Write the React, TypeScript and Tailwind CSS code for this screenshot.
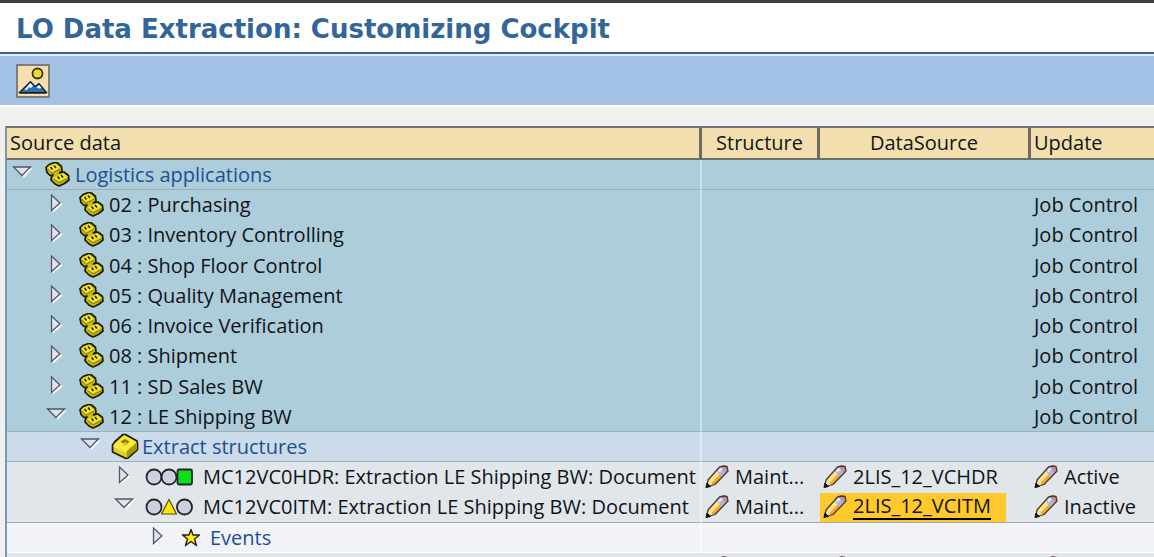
import type { ReactNode } from 'react'

type Kind = 'group' | 'app' | 'folder' | 'green' | 'yellow' | 'event'

type Row = {
  label: string
  kind: Kind
  open?: boolean
  structure?: string
  source?: string
  update?: string
  selected?: boolean
}

const rows: Row[] = [
  { label: 'Logistics applications', kind: 'group', open: true },
  { label: '02 : Purchasing', kind: 'app', update: 'Job Control' },
  { label: '03 : Inventory Controlling', kind: 'app', update: 'Job Control' },
  { label: '04 : Shop Floor Control', kind: 'app', update: 'Job Control' },
  { label: '05 : Quality Management', kind: 'app', update: 'Job Control' },
  { label: '06 : Invoice Verification', kind: 'app', update: 'Job Control' },
  { label: '08 : Shipment', kind: 'app', update: 'Job Control' },
  { label: '11 : SD Sales BW', kind: 'app', update: 'Job Control' },
  { label: '12 : LE Shipping BW', kind: 'app', update: 'Job Control', open: true },
  { label: 'Extract structures', kind: 'folder', open: true },
  {
    label: 'MC12VC0HDR: Extraction LE Shipping BW: Document',
    kind: 'green',
    structure: 'Maint...',
    source: '2LIS_12_VCHDR',
    update: 'Active',
  },
  {
    label: 'MC12VC0ITM: Extraction LE Shipping BW: Document',
    kind: 'yellow',
    open: true,
    structure: 'Maint...',
    source: '2LIS_12_VCITM',
    update: 'Inactive',
    selected: true,
  },
  { label: 'Events', kind: 'event' },
]

const rowStyle: Record<Kind, string> = {
  group: 'bg-[#aecdda]',
  app: 'bg-[#aecdda]',
  folder: 'bg-[#cbdbe9]',
  green: 'bg-[#e1e6eb]',
  yellow: 'bg-[#e1e6eb]',
  event: 'bg-[#f2f3f7]',
}

const indent: Record<Kind, string> = {
  group: 'pl-[4px]',
  app: 'pl-[38px]',
  folder: 'pl-[72px]',
  green: 'pl-[106px]',
  yellow: 'pl-[106px]',
  event: 'pl-[140px]',
}

const iconBox: Record<Kind, string> = {
  group: 'ml-[12px] w-[30px]',
  app: 'ml-[12px] w-[30px]',
  folder: 'ml-[10px] w-[31px]',
  green: 'ml-[10px] w-[58px]',
  yellow: 'ml-[10px] w-[58px]',
  event: 'ml-[12px] w-[29px]',
}

function Arrow({ open }: { open?: boolean }) {
  return open ? (
    <svg width="22" height="22" viewBox="0 0 22 22">
      <path d="M5 4.500h16.500l-8.500 9z" fill="#fff" />
      <path d="M2.500 3h17L11 11.500z" fill="#dfe3ef" stroke="#545669" strokeWidth="1.300" />
    </svg>
  ) : (
    <svg width="22" height="22" viewBox="0 0 22 22">
      <path d="M8 2.500l9.500 8L8 18.500z" fill="#fff" />
      <path d="M6.500 1v15.500l8.500-7.500z" fill="#dfe3ef" stroke="#545669" strokeWidth="1.300" />
    </svg>
  )
}

function Cubes() {
  return (
    <svg width="25" height="26" viewBox="0 0 25 26">
      <path
        d="M1 5.500L4 2.500 9.500 .5l3 .5 4 3.500 .5 4.500-2.500 2 4.500-1 4.500 3.500.5 4.500-4.500 3.500-5.500 2.500-4-2-4-4 .5-3 1.500-2L5 13.500 2 10.500z"
        fill="#c9bb12"
        stroke="#1c1b05"
        strokeWidth="1.700"
        strokeLinejoin="round"
      />
      <path d="M2.500 5.500L10 1.500l5 4.500-8 4zM8.500 15.500l9.500-4.500 4.500 4-8.500 4.500z" fill="#f4e733" />
      <path d="M3 7l4 4.500 8-4.500M9 17l5 4 9-4.500" fill="none" stroke="#857a0d" />
      <path
        d="M5.500 5l2 2.500M9 3.500l2 2.500M12.500 14.500l2 2.500M16 13l2 2.500"
        stroke="#2b2806"
        strokeWidth="1.700"
      />
    </svg>
  )
}

function Box() {
  return (
    <svg width="28" height="27" viewBox="0 0 28 27">
      <path
        d="M1.500 12L4 8.500 12 1.500h2.500L26 8l.5 3v5.500L17 25l-2 .5L1.500 19z"
        fill="#e0d21c"
        stroke="#1c1b05"
        strokeWidth="1.700"
        strokeLinejoin="round"
      />
      <path d="M2.500 12L13 2.500 25.500 9 15.500 18z" fill="#f8ec36" />
      <path d="M15.500 18.500L26 9.500v7L16 25z" fill="#a5980b" />
      <path d="M2.500 13l13 6" stroke="#fffbb0" />
      <path d="M9.500 8.500L14 6l4.500 2.500-4 4z" fill="#8b7e09" />
      <path d="M11 11l3.500-2 2.500 1.500-2.500 2z" fill="#d8c91d" />
    </svg>
  )
}

function Lights({ color }: { color: 'green' | 'yellow' }) {
  return (
    <svg width="50" height="20" viewBox="0 0 50 20">
      <g fill="#cfd0df" stroke="#24242c" strokeWidth="1.800">
        <circle cx="9" cy="10" r="7.500" />
        {color === 'green' ? <circle cx="24" cy="10" r="7.500" /> : <circle cx="39.500" cy="10" r="7.500" />}
        {color === 'green' ? (
          <rect x="32.500" y="2.500" width="14.500" height="15" rx="1.500" fill="#0be01b" />
        ) : (
          <path
            d="M24 2.500L31.500 17H16.500z"
            fill="#ffe500"
            stroke="#5a4a08"
            strokeWidth="1.200"
            strokeLinejoin="round"
          />
        )}
      </g>
    </svg>
  )
}

function Star() {
  return (
    <svg width="20" height="20" viewBox="0 0 20 20">
      <path
        d="M10 1.500l2 5.500h6.500l-5 4 2 6.500-5.500-4-5.500 4 2-6.500-5-4H8z"
        fill="#ffe91f"
        stroke="#25220a"
        strokeWidth="1.400"
        strokeLinejoin="round"
      />
    </svg>
  )
}

function Pencil() {
  return (
    <svg width="24" height="24" viewBox="0 0 24 24">
      <path d="M1.500 22l1.500-7L14.500 2l4-1.500L22 1l1 4.500L10 19.500z" fill="#f0aa2c" />
      <path d="M3.500 15.500L12 5.500l3.500 3L6 18.500z" fill="#ffe28a" />
      <path d="M11.500 5.500l3.500-3.500 6 5-4.500 5z" fill="#a8b6e0" />
      <path d="M13 5.500l3-3 2 1.500-3.500 3.500z" fill="#e3e9fb" />
      <path d="M15.500 1.500l3.500-1 3 1 .5 4-2 2z" fill="#c98a9d" />
      <path d="M3 16l3 1 2 3.500-4 1.500-2-1z" fill="#f6dcae" />
      <path
        d="M1.500 22l1.500-7L14.500 2l4-1L22 1.500l1 4.500L10 19.500z"
        fill="none"
        stroke="#4c3a30"
        strokeWidth="1.300"
        strokeLinejoin="round"
      />
      <path d="M1 22.500l1-4.500 3.500 3.500z" fill="#111" stroke="#111" />
    </svg>
  )
}

function Landscape() {
  return (
    <svg width="30" height="30" viewBox="0 0 30 30">
      <circle cx="19.500" cy="7.500" r="5" fill="#f5d92c" stroke="#3a3208" strokeWidth="1.800" />
      <path d="M1.500 26.500L12.500 15.500l4.500 5 4-3 7.500 9z" fill="#2775b4" stroke="#101c2b" strokeWidth="1.200" />
      <path d="M6.500 23.500l6-6.500 2.500 3-2 2-2-1-2 3zM18.500 21.500l2.500-2.500 2.500 3-2 .5z" fill="#fff" />
      <path d="M1.500 27h27" stroke="#101c2b" strokeWidth="1.500" />
    </svg>
  )
}

function RowIcon({ kind }: { kind: Kind }) {
  if (kind === 'folder') return <Box />
  if (kind === 'green' || kind === 'yellow') return <Lights color={kind} />
  if (kind === 'event') return <Star />
  return <Cubes />
}

function EditCell({ children, selected }: { children?: ReactNode; selected?: boolean }) {
  return (
    <button
      type="button"
      aria-label={children ? undefined : 'Edit'}
      className="flex h-[29px] w-full cursor-pointer items-center gap-[6px] pl-[3px] text-left whitespace-nowrap"
    >
      <Pencil />
      {children && (
        <span className={selected ? 'border-b-2 border-black leading-[24px]' : 'leading-[26px]'}>
          {children}
        </span>
      )}
    </button>
  )
}

function TreeRow({ row }: { row: Row }) {
  const { kind, open, selected } = row
  const line = kind === 'group' || kind === 'folder' || kind === 'yellow' || row.label.startsWith('12')
  const border = line ? 'border-b border-[#a0adb5]' : kind === 'event' ? 'border-b border-white' : ''
  const blue = kind === 'group' || kind === 'folder' || kind === 'event'

  return (
    <tr className={`h-[30px] nth-[4n]:h-[31px] ${rowStyle[kind]}`}>
      <td className={`border-r-2 border-r-white/40 ${border}`}>
        <div className={`flex h-[29px] items-center ${indent[kind]}`}>
          <button type="button" aria-label={open ? 'Collapse' : 'Expand'} className="shrink-0 cursor-pointer">
            <Arrow open={open} />
          </button>
          <span className={`flex shrink-0 ${iconBox[kind]}`}>
            <RowIcon kind={kind} />
          </span>
          <span className={blue ? 'whitespace-nowrap text-[#1c4f93]' : 'whitespace-nowrap'}>{row.label}</span>
        </div>
      </td>
      <td className={border}>{row.structure && <EditCell>{row.structure}</EditCell>}</td>
      <td className={border}>
        {row.source && (
          <div className={selected ? 'mr-[25px] bg-[#ffc92c]' : ''}>
            <EditCell selected={selected}>{row.source}</EditCell>
          </div>
        )}
      </td>
      <td className={border}>
        {row.structure ? <EditCell>{row.update}</EditCell> : <span className="pl-[3px]">{row.update}</span>}
      </td>
    </tr>
  )
}

function App() {
  return (
    <main className="flex h-screen flex-col overflow-hidden bg-[#f0f0f1] font-['Open_Sans','Noto_Sans',sans-serif] text-[20px] leading-[26px] text-[#101418]">
      <header className="shrink-0 border-t-3 border-b-2 border-t-[#404040] border-b-[#3f6199] bg-white pt-[9px] pb-[6px] pl-[16px]">
        <h1 className="font-['DejaVu_Sans',sans-serif] text-[26px] leading-[34px] font-bold whitespace-nowrap text-[#336698]">
          LO Data Extraction: Customizing Cockpit
        </h1>
      </header>
      <div className="flex shrink-0 border-y-2 border-t-[#e3eff3] border-b-white bg-[#a3c0e5] pt-[8px] pb-[7px] pl-[16px]">
        <button
          type="button"
          aria-label="Overview"
          className="flex size-[34px] cursor-pointer items-center justify-center border-2 border-[#7d7e7b] bg-[#f5dfae]"
        >
          <Landscape />
        </button>
      </div>

      <div className="mt-[19px] ml-[5px] border-t-2 border-l-2 border-t-[#66727e] border-l-[#7d96b5]">
        <table className="w-full table-fixed border-separate border-spacing-0">
          <thead>
            <tr className="h-[32px] bg-[#f3dfae] [&>th]:border-b-2 [&>th]:border-b-[#706f68] [&>th]:py-0 [&>th]:font-normal">
              <th className="border-r-3 border-r-[#706a66] pl-[3px] text-left">Source data</th>
              <th className="w-[118px] border-r-3 border-r-[#706a66]">Structure</th>
              <th className="w-[211px] border-r-3 border-r-[#706a66]">DataSource</th>
              <th className="w-[123px] pl-[3px] text-left">Update</th>
            </tr>
          </thead>
          <tbody className="[&_td]:p-0">
            {rows.map((row) => (
              <TreeRow key={row.label} row={row} />
            ))}
            <tr className="h-[30px] bg-[#e1e6eb]">
              <td />
              <td>
                <EditCell />
              </td>
              <td>
                <EditCell />
              </td>
              <td>
                <EditCell />
              </td>
            </tr>
          </tbody>
        </table>
      </div>
    </main>
  )
}

export default App
